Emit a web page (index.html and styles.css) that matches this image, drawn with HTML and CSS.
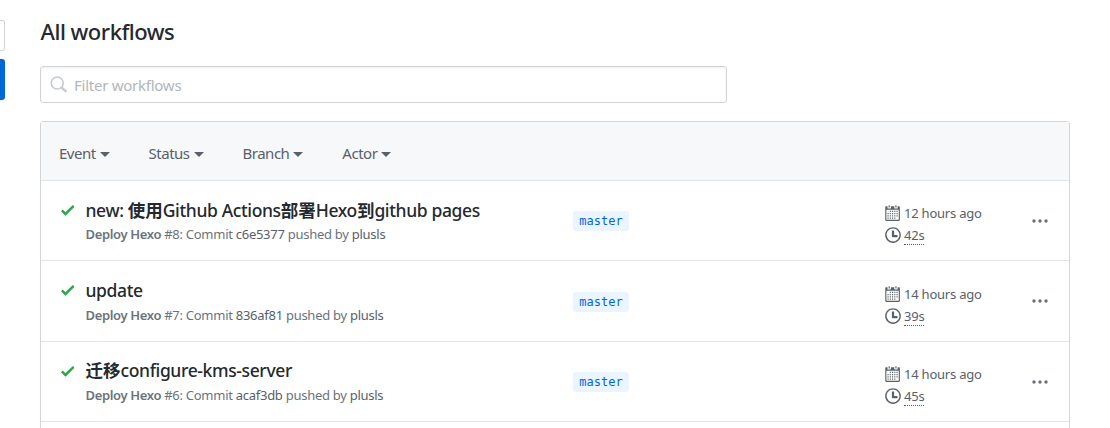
FILE: index.html
```html
<!DOCTYPE html>
<html lang="en">
<head>
<meta charset="utf-8">
<title>All workflows</title>
<link rel="stylesheet" href="styles.css">
</head>
<body>
<svg class="defs" width="0" height="0">
  <symbol id="check" viewBox="0 0 12 16"><path fill-rule="evenodd" d="M12 5l-8 8-4-4 1.500-1.500L4 10l6.500-6.500L12 5z"/></symbol>
  <symbol id="calendar" viewBox="0 0 14 16"><path fill-rule="evenodd" d="M13 2h-1v1.500c0 .28-.22.5-.5.5h-2c-.28 0-.5-.22-.5-.5V2H6v1.500c0 .28-.22.5-.5.5h-2c-.28 0-.5-.22-.5-.5V2H2c-.55 0-1 .45-1 1v11c0 .55.45 1 1 1h11c.55 0 1-.45 1-1V3c0-.55-.45-1-1-1zm0 12H2V5h11v9zM5 3H4V1h1v2zm6 0h-1V1h1v2zM6 7H5V6h1v1zm2 0H7V6h1v1zm2 0H9V6h1v1zm2 0h-1V6h1v1zM4 9H3V8h1v1zm2 0H5V8h1v1zm2 0H7V8h1v1zm2 0H9V8h1v1zm2 0h-1V8h1v1zm-8 2H3v-1h1v1zm2 0H5v-1h1v1zm2 0H7v-1h1v1zm2 0H9v-1h1v1zm2 0h-1v-1h1v1zm-8 2H3v-1h1v1zm2 0H5v-1h1v1zm2 0H7v-1h1v1zm2 0H9v-1h1v1z"/></symbol>
  <symbol id="clock" viewBox="0 0 14 16"><path fill-rule="evenodd" d="M8 8h3v2H7c-.55 0-1-.45-1-1V4h2v4zM7 2.300c3.140 0 5.700 2.560 5.700 5.700s-2.560 5.700-5.700 5.700A5.710 5.710 0 0 1 1.300 8c0-3.140 2.560-5.700 5.700-5.700zM7 1C3.140 1 0 4.140 0 8s3.140 7 7 7 7-3.140 7-7-3.140-7-7-7z"/></symbol>
  <symbol id="dots" viewBox="0 0 16 4"><circle cx="2" cy="2" r="1.750"/><circle cx="8" cy="2" r="1.750"/><circle cx="14" cy="2" r="1.750"/></symbol>
</svg>
<div class="page">
  <aside class="sidebar">
    <div class="side-box"></div>
    <div class="side-active"></div>
  </aside>
  <main class="main">
    <h1 class="heading"><span>All workflows</span></h1>
    <div class="search">
      <svg class="search-icon" viewBox="0 0 18 18"><circle cx="7.200" cy="7" r="6" fill="none" stroke="currentColor" stroke-width="1.600"/><path d="M11.500 11.500L16.500 15.800" fill="none" stroke="currentColor" stroke-width="2.400"/></svg>
      <span class="placeholder">Filter workflows</span>
    </div>
    <section class="box">
      <header class="filters">
        <div class="filter event"><span>Event</span><i class="caret"></i></div>
        <div class="filter status"><span>Status</span><i class="caret"></i></div>
        <div class="filter branch"><span>Branch</span><i class="caret"></i></div>
        <div class="filter actor"><span>Actor</span><i class="caret"></i></div>
      </header>
      <article class="row">
        <svg class="check"><use href="#check"/></svg>
        <div class="info">
          <h2 class="title"><span>new: </span><span class="cjk">使用</span><span>Github Actions</span><span class="cjk">部署</span><span>Hexo</span><span class="cjk">到</span><span>github pages</span></h2>
          <p class="meta"><b>Deploy Hexo</b> <span>#8: Commit <a>c6e5377</a> pushed by <a>plusls</a></span></p>
        </div>
        <div class="ref"><span class="tag">master</span></div>
        <div class="times">
          <div class="time"><svg class="icon cal"><use href="#calendar"/></svg><span class="ago">12 hours ago</span></div>
          <div class="time"><svg class="icon"><use href="#clock"/></svg><span class="dur">42s</span></div>
        </div>
        <svg class="dots"><use href="#dots"/></svg>
      </article>
      <article class="row tall">
        <svg class="check"><use href="#check"/></svg>
        <div class="info">
          <h2 class="title"><span>update</span></h2>
          <p class="meta"><b>Deploy Hexo</b> <span>#7: Commit <a>836af81</a> pushed by <a>plusls</a></span></p>
        </div>
        <div class="ref"><span class="tag">master</span></div>
        <div class="times">
          <div class="time"><svg class="icon cal"><use href="#calendar"/></svg><span class="ago">14 hours ago</span></div>
          <div class="time"><svg class="icon"><use href="#clock"/></svg><span class="dur">39s</span></div>
        </div>
        <svg class="dots"><use href="#dots"/></svg>
      </article>
      <article class="row last">
        <svg class="check"><use href="#check"/></svg>
        <div class="info">
          <h2 class="title"><span class="cjk">迁移</span><span>configure-kms-server</span></h2>
          <p class="meta"><b>Deploy Hexo</b> <span>#6: Commit <a>acaf3db</a> pushed by <a>plusls</a></span></p>
        </div>
        <div class="ref"><span class="tag">master</span></div>
        <div class="times">
          <div class="time"><svg class="icon cal"><use href="#calendar"/></svg><span class="ago">14 hours ago</span></div>
          <div class="time"><svg class="icon"><use href="#clock"/></svg><span class="dur">45s</span></div>
        </div>
        <svg class="dots"><use href="#dots"/></svg>
      </article>
    </section>
  </main>
</div>
</body>
</html>
```
FILE: styles.css
```css
* { box-sizing: border-box; }
html, body { margin: 0; height: 428px; overflow: hidden; }
body { background: #fff; color: #24292e; font-family: "Noto Sans", "Open Sans", "Noto Sans CJK SC", sans-serif; }
.defs { display: none; }
svg { fill: currentColor; flex: none; display: block; }
.page { display: flex; }
.sidebar { width: 40px; flex: none; padding-top: 20px; }
.side-box { width: 5px; height: 31px; border: 1px solid #d1d5da; border-left: 0; border-radius: 0 3px 3px 0; }
.side-active { width: 5px; height: 41px; margin-top: 8px; background: #0366d6; border-radius: 0 3px 3px 0; }
.main { width: 1030px; }
.heading { margin: 0; padding: 16px 0 0 0.5px; height: 66px; font-size: 22px; line-height: 30px; font-weight: 500; letter-spacing: -0.48px; white-space: nowrap; }
.search { width: 687px; height: 37px; border: 1px solid #d1d5da; border-radius: 3px; box-shadow: inset 0 1px 2px rgba(27,31,35,.075); display: flex; align-items: center; padding-left: 9px; }
.search-icon { width: 18px; height: 18px; color: #c6cbd1; }
.placeholder { margin-left: 6px; font-size: 15px; letter-spacing: -0.25px; color: #b2b6bb; line-height: 24px; }
.box { margin-top: 18px; border: 1px solid #d1d5da; border-radius: 3px 3px 0 0; height: 320px; }
.filters { height: 59px; background: #f6f8fa; border-bottom: 1px solid #e1e4e8; padding: 4px 0 0 18px; display: flex; align-items: center; gap: 39px; color: #586069; font-size: 15px; letter-spacing: -0.5px; }
.filter { display: flex; align-items: center; }
.caret { margin: 2px 0 0 4px; border: 0 solid transparent; border-width: 5px 5px 0; border-top-color: currentColor; }
.row { height: 80px; border-bottom: 1px solid #e1e4e8; display: grid; grid-template-columns: 25px 487px 312px 147px 18px; padding-left: 20px; }
.tall { height: 81px; }
.check { width: 13.500px; height: 18px; margin-top: 20px; color: #28a745; }
.last .check { margin-top: 19.500px; }
.info { padding-top: 17px; }
.last .info { padding-top: 16px; }
.title { margin: 0 0 0 -0.5px; font-size: 17.500px; line-height: 24px; font-weight: 500; letter-spacing: -0.37px; white-space: pre; display: flex; }
.cjk { font-family: "Noto Sans CJK SC", sans-serif; font-size: 17.500px; font-weight: 700; letter-spacing: 0; }
.meta { margin: 2px 0 0 -0.5px; font-size: 13px; line-height: 21px; color: #6a737d; letter-spacing: -0.27px; white-space: nowrap; }
.tall .meta, .last .meta { margin-top: 3px; }
.meta b { font-weight: 600; letter-spacing: -0.35px; }
.meta a { color: #586069; }
.ref { padding-top: 30px; }
.tag { display: block; width: 56px; height: 20px; border-radius: 3px; background: #eaf5ff; color: #0366d6; font: 12px/21px "DejaVu Sans Mono", monospace; text-align: center; }
.tall .tag { margin-top: 1px; }
.times { padding-top: 21px; color: #586069; font-size: 13px; letter-spacing: -0.22px; }
.time { height: 22px; display: flex; align-items: center; gap: 3px; white-space: nowrap; }
.tall .times { padding-top: 22px; }
.icon { width: 16px; height: 18px; }
.cal { margin: -1px 0.8px 0 -0.8px; }
.dur { line-height: 17px; border-bottom: 1px dotted #586069; margin-top: 2px; }
.dots { width: 16px; height: 4px; margin: 38px 0 0 -0.5px; color: #6a737d; }
```
